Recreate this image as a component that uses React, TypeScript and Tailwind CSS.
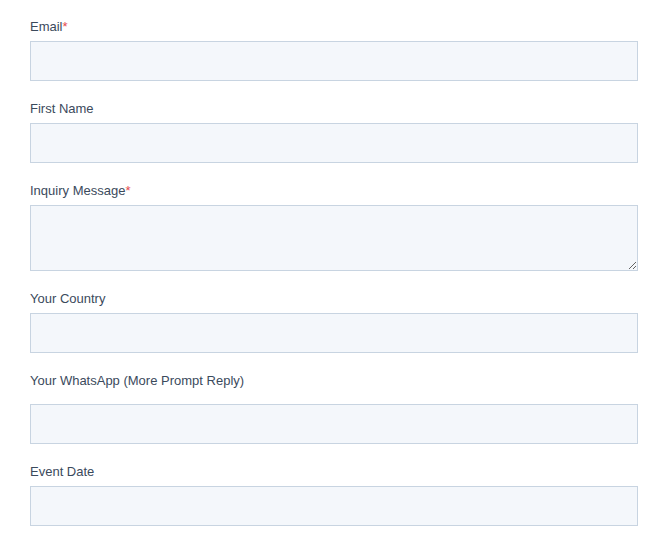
import React from 'react'

type Field = {
  label: string
  required?: boolean
  multiline?: boolean
  extraGap?: boolean
}

const fields: Field[] = [
  { label: 'Email', required: true },
  { label: 'First Name' },
  { label: 'Inquiry Message', required: true, multiline: true },
  { label: 'Your Country' },
  { label: 'Your WhatsApp (More Prompt Reply)', extraGap: true },
  { label: 'Event Date' },
]

export default function App() {
  const inputClass =
    'block w-full border border-[#c8d4e1] bg-[#f4f7fb] px-3 text-sm text-[#3b4a5c] outline-none'

  return (
    <div
      className="min-h-screen bg-white px-[30px] pt-[16px]"
      style={{ fontFamily: '"Liberation Sans", Arial, sans-serif' }}
    >
      <div className="flex w-[608px] flex-col gap-[17px]">
        {fields.map((f) => (
          <div key={f.label}>
            <label
              className={`block pt-px text-[13px] leading-[19px] text-[#3b4a5c] ${
                f.extraGap ? 'mb-[14px]' : 'mb-[5px]'
              }`}
            >
              {f.label}
              {f.required && <span className="text-[#e5484d]">*</span>}
            </label>
            {f.multiline ? (
              <textarea className={`${inputClass} h-[66px] resize-y py-2`} />
            ) : (
              <input type="text" className={`${inputClass} h-[40px]`} />
            )}
          </div>
        ))}
      </div>
    </div>
  )
}
